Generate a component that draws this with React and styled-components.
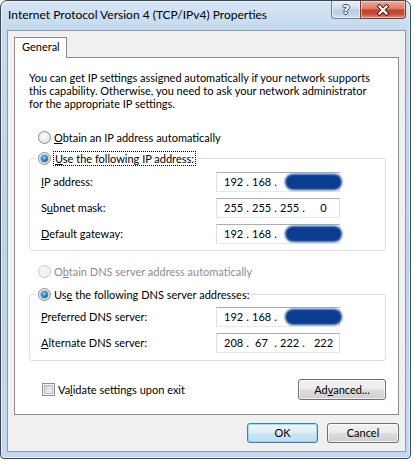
import React from "react";
import styled, { createGlobalStyle, css } from "styled-components";

const GlobalStyle = createGlobalStyle`
  html, body {
    margin: 0;
    padding: 0;
    background: #ffffff;
  }
  body {
    font-family: Lato, "Liberation Sans", Arial, sans-serif;
    font-size: 12px;
    color: #000;
  }
  * {
    box-sizing: border-box;
  }
`;

const Window = styled.div`
  width: 411px;
  height: 459px;
  display: flex;
  flex-direction: column;
  padding: 0 4px 6px 6px;
  border: 1px solid #3a4654;
  border-radius: 7px 7px 4px 4px;
  background: linear-gradient(180deg, #d7e6f6 0px, #c6daef 26px, #bdd3ec 55%, #c4d9ef 100%);
  box-shadow: inset 0 0 0 1px rgba(255, 255, 255, 0.6);
`;

const TitleBar = styled.div`
  height: 29px;
  display: flex;
  justify-content: space-between;
  align-items: flex-start;
`;

const Title = styled.div`
  margin: 7px 0 0 1px;
  font-size: 12px;
  line-height: 14px;
  white-space: nowrap;
  color: #000;
`;

const CaptionGroup = styled.div`
  display: flex;
  height: 18px;
`;

const CaptionButton = styled.div`
  height: 18px;
  width: ${p => (p.$close ? "46px" : "29px")};
  display: flex;
  align-items: center;
  justify-content: center;
  border: 1px solid ${p => (p.$close ? "#7a3a2e" : "#6e7f93")};
  border-top: none;
  ${p =>
    p.$close
      ? css`
          border-radius: 0 0 4px 0;
          background: linear-gradient(180deg, #eba99a 0%, #dc7d6d 45%, #c7442f 52%, #c34a35 75%, #dc8c76 100%);
        `
      : css`
          border-right: none;
          border-radius: 0 0 0 4px;
          background: linear-gradient(180deg, #e6eef7 0%, #d0deee 45%, #b9cce2 52%, #c2d4e8 80%, #d3e2f2 100%);
        `}
  box-shadow: inset 0 0 0 1px rgba(255, 255, 255, 0.45);
`;

const HelpGlyph = styled.span`
  font-family: "DejaVu Sans", sans-serif;
  font-weight: bold;
  font-size: 13px;
  line-height: 13px;
  color: #fff;
  text-shadow: 1px 0 #3f4d5d, -1px 0 #3f4d5d, 0 1px #3f4d5d, 0 -1px #3f4d5d;
`;

const Client = styled.div`
  flex: 1;
  display: flex;
  flex-direction: column;
  padding: 6px 6px 7px 6px;
  font-size: 11px;
  background: #f0f0f0;
  border: 1px solid #8b9aae;
`;

const TabStrip = styled.div`
  display: flex;
`;

const Tab = styled.div`
  position: relative;
  z-index: 1;
  width: 53px;
  height: 21px;
  margin-bottom: -1px;
  padding: 2px 0 0 7px;
  line-height: 14px;
  background: #fff;
  border: 1px solid #898c95;
  border-bottom: none;
`;

const Panel = styled.div`
  display: flex;
  flex-direction: column;
  padding: 13px 12px 14px 14px;
  background: #fff;
  border: 1px solid #898c95;
`;

const Description = styled.p`
  margin: 0;
  line-height: 13px;
  white-space: nowrap;
`;

const RadioRow = styled.label`
  display: flex;
  align-items: center;
  gap: 3px;
  height: 13px;
  line-height: 13px;
  white-space: nowrap;
  margin-top: ${p => p.$top || 0}px;
  padding-left: ${p => (p.$legend ? 0 : 9)}px;
  color: ${p => (p.$disabled ? "#8d8d8d" : "#000")};
`;

const RadioMark = styled.span`
  position: relative;
  flex: none;
  width: 13px;
  height: 13px;
  border-radius: 50%;
  border: 1px solid ${p => (p.$disabled ? "#c9c9c9" : "#8e8f8f")};
  background: ${p =>
    p.$disabled
      ? "#f4f4f4"
      : "radial-gradient(circle at 45% 40%, #ffffff 0%, #eeeeee 45%, #d4d4d4 100%)"};
  ${p =>
    p.$checked &&
    css`
      &::after {
        content: "";
        position: absolute;
        left: 2px;
        top: 2px;
        width: 7px;
        height: 7px;
        border-radius: 50%;
        background: radial-gradient(circle at 45% 40%, #9fdcf7 0%, #3a8ac6 40%, #12386a 100%);
        box-shadow: 0 0 0 1px rgba(120, 150, 180, 0.5);
      }
    `}
`;

const FocusText = styled.span`
  outline: 1px dotted #000;
  padding: 0 1px;
`;

const Key = styled.span`
  text-decoration: underline;
  text-underline-offset: 1px;
`;

const GroupBox = styled.fieldset`
  margin: ${p => p.$top || 0}px 0 0 0;
  padding: ${p => p.$padTop}px 11px ${p => p.$padBottom}px 11px;
  border: 1px solid #d5dfe5;
  border-radius: 3px;
  min-width: 0;
`;

const Legend = styled.legend`
  padding: 0 2px;
  margin-left: -5px;
`;

const FieldGrid = styled.div`
  display: grid;
  grid-template-columns: 175px 124px;
  grid-auto-rows: 20px;
  row-gap: 6px;
  align-items: center;
`;

const FieldLabel = styled.span`
  line-height: 14px;
  white-space: nowrap;
`;

const IpField = styled.div`
  position: relative;
  height: 20px;
  display: grid;
  grid-template-columns: 19px 9px 19px 9px 19px 9px 1fr;
  align-items: center;
  padding-left: 7px;
  line-height: 18px;
  background: #fff;
  border: 1px solid #dbdfe6;
  border-top-color: #abadb3;
  border-bottom-color: #e3e9ef;
`;

const Octet = styled.span`
  text-align: center;
  white-space: nowrap;
`;

const Dot = styled.span`
  text-align: center;
`;

const Redaction = styled.span`
  position: absolute;
  left: 68px;
  top: 1px;
  width: 57px;
  height: 16px;
  border-radius: 8px;
  background: #0a3c8f;
  filter: blur(1.3px);
`;

const BottomRow = styled.div`
  display: flex;
  justify-content: space-between;
  align-items: center;
  margin-top: 18px;
  height: 21px;
`;

const CheckRow = styled.label`
  display: flex;
  align-items: center;
  gap: 3px;
  padding-left: 13px;
  line-height: 13px;
`;

const CheckMark = styled.span`
  flex: none;
  width: 13px;
  height: 13px;
  border: 1px solid #8e8f8f;
  background: linear-gradient(135deg, #c9ccd1 0%, #e7e8ea 60%, #f6f6f6 100%);
  box-shadow: inset 0 0 0 1px #f4f4f4, inset 0 0 0 2px #b7bbc1;
`;

const Button = styled.div`
  width: ${p => p.$w}px;
  height: ${p => p.$h || 21}px;
  display: flex;
  align-items: center;
  justify-content: center;
  border-radius: 3px;
  border: 1px solid ${p => (p.$default ? "#3c7fb1" : "#707070")};
  background: ${p =>
    p.$default
      ? "linear-gradient(180deg, #ecf5fb 0%, #dfeef8 48%, #cde4f3 52%, #c3ddef 100%)"
      : "linear-gradient(180deg, #f2f2f2 0%, #ebebeb 48%, #dddddd 52%, #cfcfcf 100%)"};
  box-shadow: inset 0 0 0 1px ${p => (p.$default ? "rgba(110, 200, 240, 0.55)" : "rgba(255, 255, 255, 0.7)")};
  line-height: 14px;
`;

const DialogButtons = styled.div`
  display: flex;
  justify-content: flex-end;
  gap: 9px;
  margin-top: 8px;
`;

function Radio({ checked, disabled, legend, top, children }) {
  return (
    <RadioRow $disabled={disabled} $legend={legend} $top={top}>
      <RadioMark $checked={checked} $disabled={disabled} />
      {children}
    </RadioRow>
  );
}

function IpAddress({ octets, hidden }) {
  return (
    <IpField>
      <Octet>{octets[0]}</Octet>
      <Dot>.</Dot>
      <Octet>{octets[1]}</Octet>
      <Dot>.</Dot>
      <Octet>{octets[2]}</Octet>
      <Dot>.</Dot>
      <Octet>{octets[3]}</Octet>
      {hidden && <Redaction />}
    </IpField>
  );
}

const ipRows = [
  { label: <><Key>I</Key>P address:</>, octets: ["192", "168", "", ""], hidden: true },
  { label: <>S<Key>u</Key>bnet mask:</>, octets: ["255", "255", "255", "0"] },
  { label: <><Key>D</Key>efault gateway:</>, octets: ["192", "168", "", ""], hidden: true },
];

const dnsRows = [
  { label: <><Key>P</Key>referred DNS server:</>, octets: ["192", "168", "", ""], hidden: true },
  { label: <><Key>A</Key>lternate DNS server:</>, octets: ["208", "67", "222", "222"] },
];

export default function App() {
  return (
    <>
      <GlobalStyle />
      <Window>
        <TitleBar>
          <Title>Internet Protocol Version 4 (TCP/IPv4) Properties</Title>
          <CaptionGroup>
            <CaptionButton>
              <HelpGlyph>?</HelpGlyph>
            </CaptionButton>
            <CaptionButton $close>
              <svg width="14" height="12" viewBox="0 0 14 12">
                <path d="M3.5 2.5 L10.5 9.5 M10.5 2.5 L3.5 9.5" stroke="#4b2119" strokeWidth="4.2" strokeLinecap="square" fill="none" />
                <path d="M3.5 2.5 L10.5 9.5 M10.5 2.5 L3.5 9.5" stroke="#ffffff" strokeWidth="2.2" strokeLinecap="square" fill="none" />
              </svg>
            </CaptionButton>
          </CaptionGroup>
        </TitleBar>

        <Client>
          <TabStrip>
            <Tab>General</Tab>
          </TabStrip>
          <Panel>
            <Description>
              You can get IP settings assigned automatically if your network supports
              <br />
              this capability. Otherwise, you need to ask your network administrator
              <br />
              for the appropriate IP settings.
            </Description>

            <Radio top={21}>
              <span><Key>O</Key>btain an IP address automatically</span>
            </Radio>

            <GroupBox $top={8} $padTop={7} $padBottom={6}>
              <Legend>
                <Radio checked legend>
                  <FocusText><Key>U</Key>se the following IP address:</FocusText>
                </Radio>
              </Legend>
              <FieldGrid>
                {ipRows.map((row, i) => (
                  <React.Fragment key={i}>
                    <FieldLabel>{row.label}</FieldLabel>
                    <IpAddress octets={row.octets} hidden={row.hidden} />
                  </React.Fragment>
                ))}
              </FieldGrid>
            </GroupBox>

            <Radio disabled top={14}>
              <span>O<Key>b</Key>tain DNS server address automatically</span>
            </Radio>

            <GroupBox $top={10} $padTop={6} $padBottom={7}>
              <Legend>
                <Radio checked legend>
                  <span>Us<Key>e</Key> the following DNS server addresses:</span>
                </Radio>
              </Legend>
              <FieldGrid>
                {dnsRows.map((row, i) => (
                  <React.Fragment key={i}>
                    <FieldLabel>{row.label}</FieldLabel>
                    <IpAddress octets={row.octets} hidden={row.hidden} />
                  </React.Fragment>
                ))}
              </FieldGrid>
            </GroupBox>

            <BottomRow>
              <CheckRow>
                <CheckMark />
                <span>Va<Key>l</Key>idate settings upon exit</span>
              </CheckRow>
              <Button $w={88}>
                <span>Ad<Key>v</Key>anced...</span>
              </Button>
            </BottomRow>
          </Panel>

          <DialogButtons>
            <Button $w={71} $h={20} $default>OK</Button>
            <Button $w={72} $h={20}>Cancel</Button>
          </DialogButtons>
        </Client>
      </Window>
    </>
  );
}
